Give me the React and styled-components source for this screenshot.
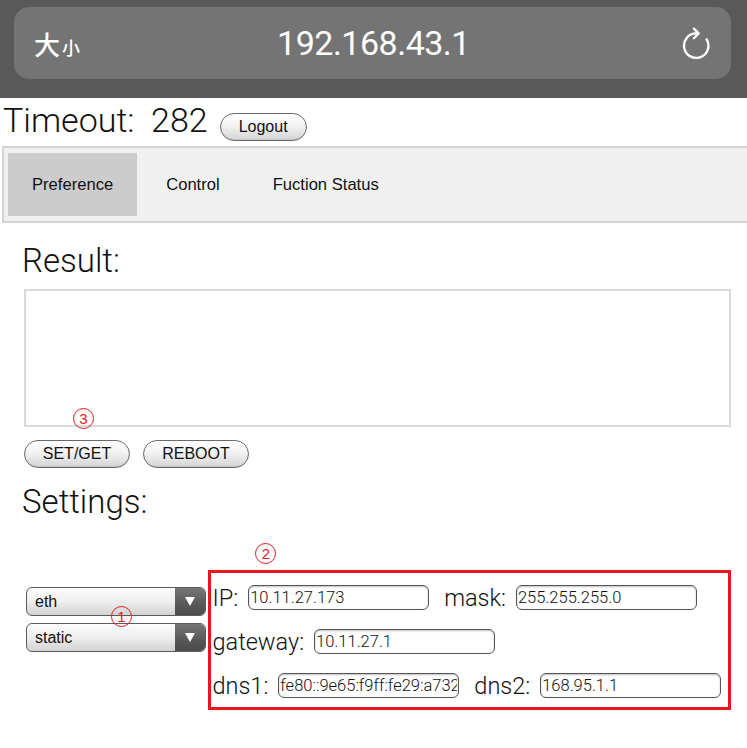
import React from 'react';
import styled, { createGlobalStyle } from 'styled-components';

const GlobalStyle = createGlobalStyle`
  body {
    margin: 0;
    background: #fff;
    font-family: "Liberation Sans", Arial, sans-serif;
    color: #111;
  }
`;

const tabs = ['Preference', 'Control', 'Fuction Status'];

const ReloadIcon = () => (
  <svg width="34" height="34" viewBox="0 0 32 32" fill="none" stroke="#fff" strokeWidth="2.2" strokeLinecap="round" strokeLinejoin="round">
    <path d="M16 7 A11.5 11.5 0 1 0 26 12.5" />
    <path d="M16 7 H18" />
    <path d="M14 2.5 L18.5 7 L14 11.5" />
  </svg>
);

const App = () => {
  return (
    <Page>
      <GlobalStyle />
      <BrowserBar>
        <AddressField>
          <TextSize>
            <Big>大</Big>
            <Small>小</Small>
          </TextSize>
          <Url>192.168.43.1</Url>
          <ReloadIcon />
        </AddressField>
      </BrowserBar>

      <TimeoutRow>
        <TimeoutText>Timeout:&nbsp; 282</TimeoutText>
        <PillButton>Logout</PillButton>
      </TimeoutRow>

      <Nav>
        {tabs.map((t, i) => (
          <Tab key={t} active={i === 0}>{t}</Tab>
        ))}
      </Nav>

      <Main>
        <Heading>Result:</Heading>
        <ResultArea>
          <Marker style={{ left: 47, bottom: -4 }}>3</Marker>
        </ResultArea>
        <ButtonRow>
          <PillButton wide>SET/GET</PillButton>
          <PillButton wide>REBOOT</PillButton>
        </ButtonRow>

        <Heading settings>Settings:</Heading>

        <SettingsRow>
          <SelectColumn>
            <Marker style={{ left: 85, top: 19 }}>1</Marker>
            <FakeSelect>
              <SelectValue>eth</SelectValue>
              <SelectArrow />
            </FakeSelect>
            <FakeSelect>
              <SelectValue>static</SelectValue>
              <SelectArrow />
            </FakeSelect>
          </SelectColumn>

          <AddressBox>
            <Marker style={{ left: 44, top: -30 }}>2</Marker>
            <FieldRow>
              <Label>IP:</Label>
              <Field readOnly defaultValue="10.11.27.173" />
              <Label gap>mask:</Label>
              <Field readOnly defaultValue="255.255.255.0" />
            </FieldRow>
            <FieldRow>
              <Label>gateway:</Label>
              <Field readOnly defaultValue="10.11.27.1" />
            </FieldRow>
            <FieldRow>
              <Label>dns1:</Label>
              <Field readOnly defaultValue="fe80::9e65:f9ff:fe29:a732" />
              <Label gap>dns2:</Label>
              <Field readOnly defaultValue="168.95.1.1" />
            </FieldRow>
          </AddressBox>
        </SettingsRow>
      </Main>
    </Page>
  );
};

const Page = styled.div`
  width: 747px;
  min-height: 748px;
  background: #fff;
`;

const BrowserBar = styled.div`
  height: 98px;
  box-sizing: border-box;
  background: #595959;
  padding: 7px 16px 19px 14px;
`;

const AddressField = styled.div`
  height: 72px;
  border-radius: 15px;
  background: #747474;
  display: flex;
  align-items: center;
  justify-content: space-between;
  padding: 0 18px 0 20px;
  color: #fff;
`;

const TextSize = styled.div`
  display: flex;
  align-items: baseline;
  width: 90px;
  font-family: "Noto Sans CJK SC", sans-serif;
  font-weight: 500;
`;

const Big = styled.span`
  font-size: 26px;
`;

const Small = styled.span`
  font-size: 18px;
  margin-left: 2px;
`;

const Url = styled.div`
  font-family: Roboto, "Liberation Sans", sans-serif;
  font-size: 34px;
  letter-spacing: -0.5px;
  margin-right: 56px;
`;

const TimeoutRow = styled.div`
  height: 48px;
  box-sizing: border-box;
  display: flex;
  align-items: baseline;
  padding: 2px 0 0 3px;
`;

const TimeoutText = styled.span`
  font-family: Roboto, "Liberation Sans", sans-serif;
  font-weight: 300;
  font-size: 34px;
  color: #111;
  margin-right: 12px;
`;

const PillButton = styled.button`
  height: 28px;
  padding: 0 17px;
  min-width: ${p => (p.wide ? '106px' : '87px')};
  border: 1px solid #6a6a6a;
  border-radius: 14px;
  background: linear-gradient(#ffffff, #f2f2f2 45%, #d4d4d4);
  font-family: "Liberation Sans", Arial, sans-serif;
  font-size: 16px;
  color: #111;
  box-shadow: inset 0 -1px 1px rgba(0, 0, 0, 0.08);
`;

const Nav = styled.div`
  margin-left: 2px;
  height: 77px;
  box-sizing: border-box;
  display: flex;
  padding: 5px 4px;
  background: #f0f0f0;
  border: 2px solid #d3d3d3;
  border-right: none;
`;

const Tab = styled.div`
  display: flex;
  align-items: center;
  padding: 0 24px;
  margin-right: 5px;
  font-size: 16.6px;
  color: #111;
  background: ${p => (p.active ? '#cccccc' : 'transparent')};
`;

const Main = styled.div`
  padding: 0 16px 0 22px;
`;

const Heading = styled.h2`
  margin: ${p => (p.settings ? '14px 0 0' : '18px 0 0')};
  font-family: Roboto, "Liberation Sans", sans-serif;
  font-weight: 300;
  font-size: 33px;
  line-height: 40px;
  color: #111;
`;

const ResultArea = styled.div`
  position: relative;
  margin: 8px 0 0 2px;
  height: 134px;
  border: 2px solid #dadada;
`;

const ButtonRow = styled.div`
  display: flex;
  gap: 13px;
  margin: 13px 0 0 2px;
`;

const Marker = styled.span`
  position: absolute;
  width: 19px;
  height: 19px;
  border: 1.5px solid #e8161e;
  border-radius: 50%;
  color: #e8161e;
  font-family: "Liberation Sans", Arial, sans-serif;
  font-size: 15px;
  line-height: 19px;
  text-align: center;
`;

const SettingsRow = styled.div`
  display: flex;
  align-items: flex-start;
  margin-top: 48px;
`;

const SelectColumn = styled.div`
  position: relative;
  display: flex;
  flex-direction: column;
  gap: 7px;
  width: 181px;
  margin: 17px 0 0 4px;
`;

const FakeSelect = styled.div`
  display: flex;
  height: 29px;
  box-sizing: border-box;
  border: 1px solid #5c5c5c;
  border-radius: 6px;
  overflow: hidden;
  background: linear-gradient(#fcfcfc, #eeeeee 50%, #d2d2d2);
`;

const SelectValue = styled.div`
  flex: 1;
  display: flex;
  align-items: center;
  padding-left: 8px;
  font-size: 16px;
  color: #111;
`;

const SelectArrow = styled.div`
  width: 30px;
  display: flex;
  align-items: center;
  justify-content: center;
  background: linear-gradient(#777, #5a5a5a 55%, #4a4a4a);

  &::after {
    content: '';
    border-left: 5px solid transparent;
    border-right: 5px solid transparent;
    border-top: 9px solid #fff;
  }
`;

const AddressBox = styled.div`
  position: relative;
  margin-left: 2px;
  width: 524px;
  height: 140px;
  box-sizing: border-box;
  border: 3px solid #e8161e;
  padding: 12px 0 0 1px;
  display: flex;
  flex-direction: column;
  gap: 19px;
`;

const FieldRow = styled.div`
  display: flex;
  align-items: center;
  height: 25px;
`;

const Label = styled.span`
  font-family: Roboto, "Liberation Sans", sans-serif;
  font-weight: 300;
  font-size: 23.5px;
  color: #111;
  margin: 0 10px 0 ${p => (p.gap ? '15px' : '0')};
`;

const Field = styled.input`
  width: 181px;
  height: 25px;
  box-sizing: border-box;
  border: 1.5px solid #555;
  border-radius: 6px;
  padding: 0 1px;
  font-family: Roboto, "Liberation Sans", sans-serif;
  font-weight: 300;
  font-size: 16.5px;
  color: #111;
  box-shadow: inset 0 1px 2px rgba(0, 0, 0, 0.25);
  outline: none;
`;

export default App;
